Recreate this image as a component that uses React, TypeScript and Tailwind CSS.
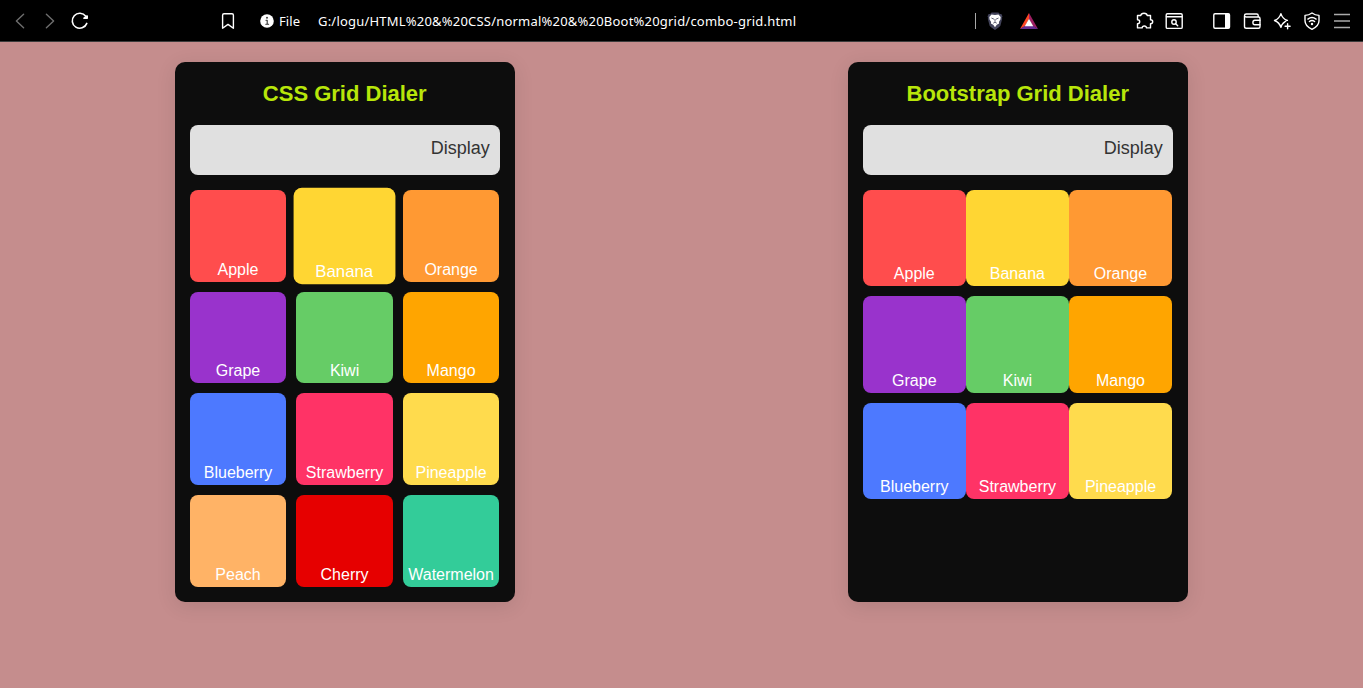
import type { ReactNode } from "react";

type Fruit = { name: string; color: string };

const fruits: Fruit[] = [
  { name: "Apple", color: "bg-[#ff4d4d]" },
  { name: "Banana", color: "bg-[#ffd633]" },
  { name: "Orange", color: "bg-[#ff9933]" },
  { name: "Grape", color: "bg-[#9933cc]" },
  { name: "Kiwi", color: "bg-[#66cc66]" },
  { name: "Mango", color: "bg-[#ffa500]" },
  { name: "Blueberry", color: "bg-[#4d79ff]" },
  { name: "Strawberry", color: "bg-[#ff3366]" },
  { name: "Pineapple", color: "bg-[#ffdb4d]" },
  { name: "Peach", color: "bg-[#ffb366]" },
  { name: "Cherry", color: "bg-[#e60000]" },
  { name: "Watermelon", color: "bg-[#33cc99]" },
];

function Icon({ children, className = "" }: { children: ReactNode; className?: string }) {
  return (
    <svg
      viewBox="0 0 20 20"
      fill="none"
      stroke="currentColor"
      strokeWidth="1.4"
      strokeLinecap="round"
      strokeLinejoin="round"
      className={`size-5 shrink-0 ${className}`}
    >
      {children}
    </svg>
  );
}

function Toolbar() {
  return (
    <header className="flex h-[42px] items-center border-b border-[#3c3c3c] bg-black pr-[11px] pl-2.5 font-['Noto_Sans',sans-serif] text-[13px] text-white">
      <div className="flex gap-2.5">
        <Icon className="text-[#6e6e6e]"><path d="M13.6 3.2 6.4 10l7.2 6.8" /></Icon>
        <Icon className="text-[#6e6e6e]"><path d="M6.4 3.2 13.6 10l-7.2 6.8" /></Icon>
        <Icon>
          <path d="M16.8 12.4A7.5 7.5 0 1 1 15.800 5.300" strokeWidth="1.6" />
          <path d="M14 7.200h3.200v-2.200z" fill="currentColor" strokeWidth="1.600" />
        </Icon>
      </div>
      <Icon className="ml-32"><path d="M4.6 4.2c0-.9.5-1.4 1.4-1.4h8c.9 0 1.4.5 1.4 1.4v13L10 13.4l-5.4 3.8z" /></Icon>
      <Icon className="ml-[19px]">
        <circle cx="10" cy="10" r="6.8" fill="currentColor" stroke="none" />
        <path d="M9 9.2h1.2v4M8.8 13.3h2.8" stroke="#333" strokeWidth="1.1" />
        <circle cx="10" cy="6.7" r=".95" fill="#333" stroke="none" />
      </Icon>
      <span className="ml-0.5 w-[39px] pt-0.5 tracking-[0.1px]">File</span>
      <span className="w-[657px] pt-0.5 tracking-[0.205px] whitespace-nowrap">
        G:/logu/HTML%20&amp;%20CSS/normal%20&amp;%20Boot%20grid/combo-grid.html
      </span>
      <span className="h-4 w-px bg-[#a8a8a8]" />
      <Icon className="ml-[9px]">
        <path d="M6.6 1.6h6.8l1.4 1.5 1.6-.1 1.1 2.4-.6 1.3.3 1-1.8 7-1.5 1.6L10 18.9l-3.9-2.6-1.5-1.6-1.8-7 .3-1-.6-1.3L3.6 3l1.6.1z" fill="#42435a" stroke="none" />
        <path d="m6.500 3.500 3.500.5 3.500-.5 2.200 2.400-.3 2.600-1.500 2.500.2 1.500-2.300 1.300-1.800 2.400-1.800-2.400-2.300-1.300.2-1.500-1.500-2.500-.3-2.600z" fill="#fff" stroke="none" />
        <path d="m6.8 7.2 2 .9M13.2 7.2l-2 .9M10 8.500v2M8.600 12l1.400-.7 1.400.7" stroke="#55566a" strokeWidth=".9" />
      </Icon>
      <Icon className="ml-3.5">
        <path d="M10 2 1 18l5-2.8L10 8z" fill="#ff4724" stroke="none" />
        <path d="m10 2 9 16-5-2.8L10 8z" fill="#9e1f63" stroke="none" />
        <path d="M1 18h18l-5-3.2H6z" fill="#662d91" stroke="none" />
        <path d="m10 7.8 4.3 7.4H5.7z" fill="#fff" stroke="none" />
      </Icon>
      <div className="ml-[95px] flex gap-2.5">
        <Icon>
          <path d="M3.500 4.500h3.300C7 3.100 8.200 2.300 10 2.300s3 .8 3.200 2.200h3.300v4.300c1.400.1 2.200.7 2.200 1.900s-.8 1.900-2.200 2v4.200h-4c-.1-1.300-.9-1.900-2.200-1.900s-2.100.6-2.200 1.900H3.500v-4.200c1.500-.1 2.200-.8 2.200-2s-.7-1.800-2.200-1.900z" />
        </Icon>
        <Icon>
          <rect x="2.2" y="2.8" width="16" height="14.6" rx="1.2" />
          <path d="M2.5 5.8h15.4" strokeWidth="1.5" />
          <circle cx="10" cy="11" r="2.2" />
          <path d="m11.7 12.7 2 2" />
        </Icon>
      </div>
      <div className="ml-7 flex gap-2.5">
        <Icon>
          <rect x="1.8" y="2.8" width="15.7" height="14.4" rx="1.2" />
          <path d="M13 3h4v14h-4z" fill="currentColor" stroke="none" />
        </Icon>
        <Icon>
          <path d="M2.5 5v10.400c0 1 .8 1.800 1.800 1.800h12.200c.8 0 1.500-.6 1.500-1.500V7.500c0-.8-.7-1.500-1.500-1.500H4.200c-1 0-1.700-.6-1.700-1.500S3.200 3 4.200 3h10.500c.9 0 1.500.6 1.500 1.500V6" />
          <path d="M18 9.200h-5.200c-1.200 0-1.900.9-1.900 2.300s.7 2.300 1.900 2.300H18" />
        </Icon>
        <Icon>
          <path d="M8.900 2.600c1.200 4 2.500 5.500 6.500 6.900-4 1.400-5.300 2.900-6.500 6.900-1.200-4-2.500-5.500-6.400-6.900 3.900-1.400 5.200-2.900 6.400-6.900Z" />
          <path d="M15.6 12v6.4M12.4 15.2h6.4" stroke="#000" strokeWidth="4" />
          <path d="M15.6 12.7v5M13.1 15.2h5" />
        </Icon>
        <Icon>
          <path d="M10 2c2.2 1.6 4.4 2.3 7 2.4v5.4c0 4-2.8 6.6-7 8.5-4.2-1.9-7-4.5-7-8.5V4.4C5.6 4.3 7.8 3.6 10 2Z" />
          <path d="M5.9 8.1a6.7 6.7 0 0 1 8.2 0M7.4 10.5a4.2 4.2 0 0 1 5.2 0" />
          <circle cx="10" cy="13" r="1.2" fill="currentColor" stroke="none" />
        </Icon>
        <Icon className="text-[#aaa]"><path d="M2 3.5h16M2 10h16M2 16.5h16" strokeLinecap="butt" /></Icon>
      </div>
    </header>
  );
}

function Dialer({ title, children }: { title: string; children: ReactNode }) {
  return (
    <section className="h-[540px] w-[340px] rounded-[10px] bg-[#0d0d0d] p-[15px] shadow-[0_4px_20px_rgba(0,0,0,0.1)]">
      <h2 className="mb-[15px] h-[33px] text-center text-[22px] leading-[33px] font-bold text-[#b8e60a]">{title}</h2>
      <div className="mb-[15px] h-[50px] rounded-lg bg-[#e0e0e0] px-2.5 pt-2.5 text-right text-[18px] leading-[27px] text-[#333]">
        Display
      </div>
      {children}
    </section>
  );
}

function Tile({ fruit, className = "" }: { fruit: Fruit; className?: string }) {
  return (
    <div className={`flex items-end justify-center rounded-lg text-base leading-6 text-white ${fruit.color} ${className}`}>
      {fruit.name}
    </div>
  );
}

export default function App() {
  return (
    <div className="flex h-[688px] flex-col overflow-hidden bg-[#c58d8d] font-['Liberation_Sans',Arial,sans-serif]">
      <Toolbar />
      <main className="flex justify-between pt-5 pr-[175.25px] pl-[174.75px]">
        <Dialer title="CSS Grid Dialer">
          <div className="grid h-[396.6px] w-[309.6px] grid-cols-3 grid-rows-4 gap-2.5">
            {fruits.map((fruit) => (
              <Tile key={fruit.name} fruit={fruit} className={fruit.name === "Banana" ? "scale-105" : ""} />
            ))}
          </div>
        </Dialer>
        <Dialer title="Bootstrap Grid Dialer">
          <div className="grid h-[309px] w-[309.3px] grid-cols-3 grid-rows-3 gap-y-2.5">
            {fruits.slice(0, 9).map((fruit) => (
              <Tile key={fruit.name} fruit={fruit} />
            ))}
          </div>
        </Dialer>
      </main>
    </div>
  );
}
